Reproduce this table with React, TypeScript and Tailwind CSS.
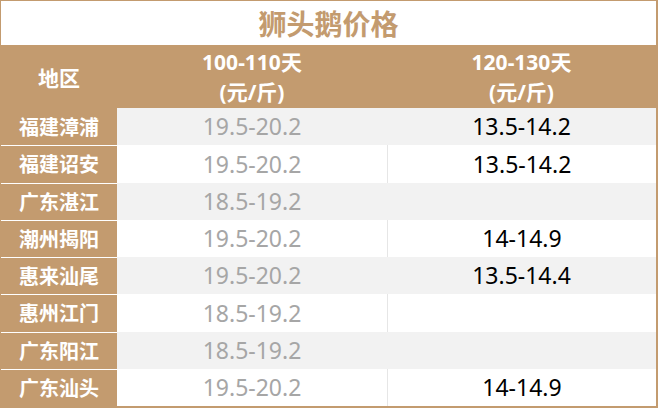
const rows = [
  { area: "福建漳浦", a: "19.5-20.2", b: "13.5-14.2" },
  { area: "福建诏安", a: "19.5-20.2", b: "13.5-14.2" },
  { area: "广东湛江", a: "18.5-19.2", b: "" },
  { area: "潮州揭阳", a: "19.5-20.2", b: "14-14.9" },
  { area: "惠来汕尾", a: "19.5-20.2", b: "13.5-14.4" },
  { area: "惠州江门", a: "18.5-19.2", b: "" },
  { area: "广东阳江", a: "18.5-19.2", b: "" },
  { area: "广东汕头", a: "19.5-20.2", b: "14-14.9" },
]

const cjk = "font-['Microsoft_YaHei','Noto_Sans_CJK_SC',sans-serif]"

export default function App() {
  return (
    <div className={`w-[658px] h-[408px] bg-white flex flex-col border-t border-l border-r-2 border-b-2 border-[#c39b6f] ${cjk}`}>
      {/* Title */}
      <div className="h-[44px] flex items-center justify-center text-[28px] font-bold text-[#c39b6f] leading-none">
        狮头鹅价格
      </div>

      {/* Header */}
      <div className="h-[63px] flex bg-[#c39b6f] text-white font-bold text-[21px] leading-[30px]">
        <div className="w-[116px] flex items-center justify-center">地区</div>
        <div className="w-[270px] flex flex-col items-center justify-center font-['Noto_Sans','Noto_Sans_CJK_SC',sans-serif]">
          <span>100-110天</span>
          <span>(元/斤)</span>
        </div>
        <div className="flex-1 flex flex-col items-center justify-center font-['Noto_Sans','Noto_Sans_CJK_SC',sans-serif]">
          <span>120-130天</span>
          <span>(元/斤)</span>
        </div>
      </div>

      {/* Rows */}
      {rows.map((r, i) => {
        const gray = i % 2 === 0
        return (
          <div key={r.area} className={`flex-1 flex ${gray ? "bg-[#f2f2f2]" : "bg-white"}`}>
            <div
              className={`w-[116px] flex items-center justify-center bg-[#c39b6f] text-white font-bold text-[20px] ${
                i > 0 ? "border-t border-white" : ""
              }`}
            >
              {r.area}
            </div>
            <div className="w-[270px] flex items-center justify-center text-[23px] text-[#a6a6a6] font-['Noto_Sans',sans-serif]">
              {r.a}
            </div>
            <div
              className={`flex-1 flex items-center justify-center text-[23px] text-black font-['Noto_Sans',sans-serif] ${
                gray ? "" : "border-l border-[#e6e6e6]"
              }`}
            >
              {r.b}
            </div>
          </div>
        )
      })}
    </div>
  )
}
